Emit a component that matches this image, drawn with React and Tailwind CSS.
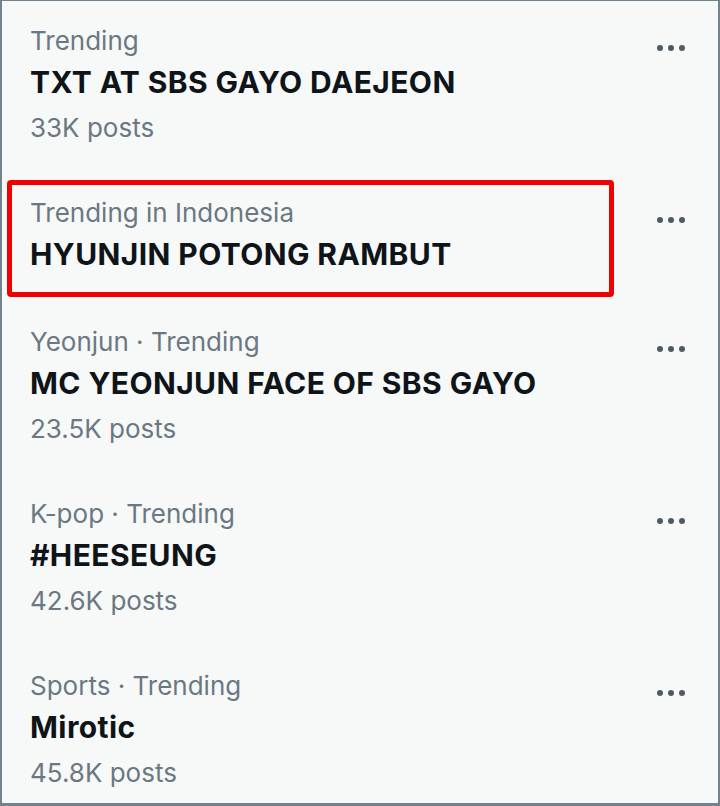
import React from "react";

const rows = [
  { meta: "Trending", title: "TXT AT SBS GAYO DAEJEON", posts: "33K posts" },
  { meta: "Trending in Indonesia", title: "HYUNJIN POTONG RAMBUT", highlight: true },
  { meta: "Yeonjun · Trending", title: "MC YEONJUN FACE OF SBS GAYO", posts: "23.5K posts" },
  { meta: "K-pop · Trending", title: "#HEESEUNG", posts: "42.6K posts" },
  { meta: "Sports · Trending", title: "Mirotic", posts: "45.8K posts" },
];

function Dots() {
  return (
    <div className="absolute right-[33px] top-[44px] flex gap-[5px]">
      <span className="block w-[6px] h-[6px] rounded-full bg-[#4f5b64]" />
      <span className="block w-[6px] h-[6px] rounded-full bg-[#4f5b64]" />
      <span className="block w-[6px] h-[6px] rounded-full bg-[#4f5b64]" />
    </div>
  );
}

export default function App() {
  return (
    <div
      className="w-[720px] h-[806px] overflow-hidden bg-[#f7f9f9] border-l-2 border-r-2 border-t border-b-[3px] border-[#71838d]"
      style={{ fontFamily: "Inter, 'Noto Sans', 'Liberation Sans', sans-serif" }}
    >
      {rows.map((r, i) => (
        <div
          key={i}
          className={`relative pl-[28px] pt-[23px] ${r.posts ? "pb-[23px]" : "pb-[24px]"}`}
        >
          {r.highlight && (
            <div className="absolute left-[5px] top-[7px] w-[607px] h-[117px] border-[5px] border-[#f00000] rounded-[4px]" />
          )}
          <div className="text-[26px] leading-[34px] text-[#6b7882]">{r.meta}</div>
          <div className="text-[30px] leading-[48px] font-bold tracking-[0.4px] text-[#0f1419]">{r.title}</div>
          {r.posts && (
            <div className="text-[26px] leading-[44px] text-[#6b7882]">{r.posts}</div>
          )}
          <Dots />
        </div>
      ))}
    </div>
  );
}
